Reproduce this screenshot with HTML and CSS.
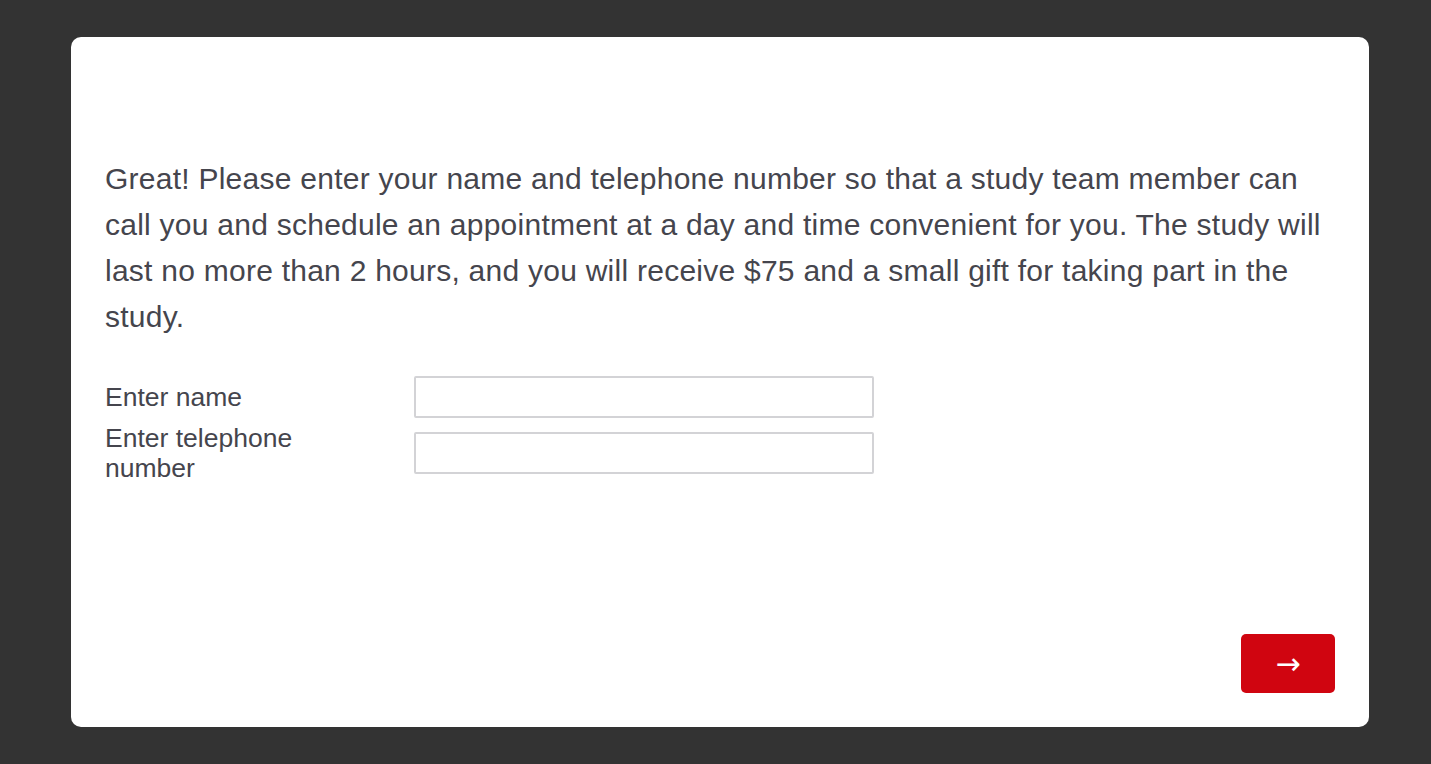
FILE: index.html
```html
<!DOCTYPE html>
<html lang="en">
<head>
  <meta charset="UTF-8" />
  <title>Study Signup</title>
  <link rel="stylesheet" href="styles.css">
</head>
<body>
  <div class="survey-card">
    <div class="question">
      <p class="question-text">Great! Please enter your name and telephone number so that a study team member can call you and schedule an appointment at a day and time convenient for you. The study will last no more than 2 hours, and you will receive $75 and a small gift for taking part in the study.</p>
      <form class="contact-form">
        <div class="form-row">
          <label for="name">Enter name</label>
          <input type="text" id="name">
        </div>
        <div class="form-row">
          <label for="phone">Enter telephone number</label>
          <input type="text" id="phone">
        </div>
      </form>
    </div>
    <div class="nav">
      <button type="button" class="next-btn">&rarr;</button>
    </div>
  </div>
</body>
</html>
```

FILE: styles.css
```css
body {
  margin: 0;
  background: #333333;
  font-family: 'Liberation Sans', Arial, sans-serif;
  color: #45454d;
  padding: 37px 62px 37px 71px;
}
.survey-card {
  background: #ffffff;
  border-radius: 10px;
  height: 690px;
  box-sizing: border-box;
  padding: 119px 34px 34px 34px;
  display: flex;
  flex-direction: column;
}
.question {
  flex: 1;
}
.question-text {
  margin: 0;
  font-size: 30px;
  letter-spacing: 0.25px;
  line-height: 46px;
}
.contact-form {
  margin-top: 36px;
  display: flex;
  flex-direction: column;
  gap: 5px;
}
.form-row {
  display: flex;
  align-items: center;
}
.form-row label {
  width: 240px;
  margin-right: 69px;
  font-size: 26.5px;
  line-height: 30px;
}
.form-row input {
  width: 460px;
  height: 42px;
  box-sizing: border-box;
  border: 2px solid #d3d3d6;
  border-radius: 2px;
  font-size: 22px;
  padding: 4px 8px;
  margin: 0;
}
.nav {
  display: flex;
  justify-content: flex-end;
}
.next-btn {
  width: 94px;
  height: 59px;
  background: #d00510;
  color: #ffffff;
  border: none;
  border-radius: 5px;
  font-size: 30px;
  font-family: 'DejaVu Sans', sans-serif;
  cursor: pointer;
}
```
